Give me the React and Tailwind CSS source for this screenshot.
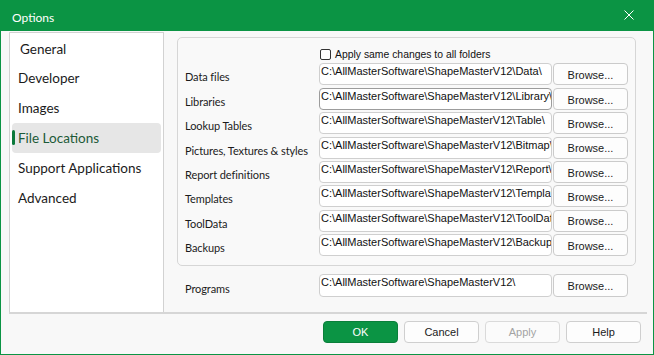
import React from 'react';

const ui = { fontFamily: 'Lato, "Noto Sans", sans-serif' };
const ms = { fontFamily: '"Liberation Sans", Arial, sans-serif' };

const navItems = ['General', 'Developer', 'Images', 'File Locations', 'Support Applications', 'Advanced'];

const folders = [
  ['Data files', 'C:\\AllMasterSoftware\\ShapeMasterV12\\Data\\'],
  ['Libraries', 'C:\\AllMasterSoftware\\ShapeMasterV12\\Library\\'],
  ['Lookup Tables', 'C:\\AllMasterSoftware\\ShapeMasterV12\\Table\\'],
  ['Pictures, Textures & styles', 'C:\\AllMasterSoftware\\ShapeMasterV12\\Bitmap\\'],
  ['Report definitions', 'C:\\AllMasterSoftware\\ShapeMasterV12\\Report\\'],
  ['Templates', 'C:\\AllMasterSoftware\\ShapeMasterV12\\Templates\\'],
  ['ToolData', 'C:\\AllMasterSoftware\\ShapeMasterV12\\ToolData\\'],
  ['Backups', 'C:\\AllMasterSoftware\\ShapeMasterV12\\Backups\\'],
];

const PathRow = ({ label, value, focused }) => (
  <div className="flex items-start h-[22px]">
    <div className="w-[134px] mt-[6px] leading-[16px] text-[11px] tracking-[-0.1px] text-[#1b1b1b] whitespace-nowrap" style={ui}>
      {label}
    </div>
    <div
      className={`w-[233px] h-[22px] bg-white rounded-[4px] border overflow-hidden whitespace-nowrap pl-[1px] pt-[1px] text-[11px] leading-[13px] text-[#111] ${
        focused ? 'border-[#9c9c9c]' : 'border-[#cfcfcf]'
      }`}
      style={ms}
    >
      {value}
    </div>
    <button
      className="ml-[1px] w-[75px] h-[22px] bg-[#fdfdfd] border border-[#cbcbcb] rounded-[4px] text-[11px] text-[#1b1b1b] flex items-center justify-center pt-[2px]"
      style={ms}
    >
      Browse...
    </button>
  </div>
);

const FooterButton = ({ children, primary, disabled }) => (
  <button
    className={`w-[75px] h-[22px] rounded-[4px] border text-[11px] flex items-center justify-center ${
      primary
        ? 'bg-[#0b9444] border-[#0a7f3a] text-white'
        : disabled
        ? 'bg-[#fbfbfb] border-[#dadada] text-[#a3a3a3]'
        : 'bg-[#fdfdfd] border-[#cfcfcf] text-[#1b1b1b]'
    }`}
    style={ms}
  >
    {children}
  </button>
);

export default function App() {
  return (
    <div className="w-[654px] h-[355px] border border-[#0b9444] bg-[#f8f8f8] flex flex-col overflow-hidden">
      {/* title bar */}
      <div className="h-[30px] bg-[#0b9444] flex items-center justify-between pl-[11px] pr-[19px] pt-[3px] shrink-0">
        <span className="text-white text-[12px]" style={ui}>Options</span>
        <svg width="10" height="10" viewBox="0 0 10 10" className="-mt-[5px]">
          <path d="M0.5 0.5 L9.5 9.5 M9.5 0.5 L0.5 9.5" stroke="white" strokeWidth="1" />
        </svg>
      </div>

      {/* body */}
      <div className="flex ml-[8px] mr-[6px] h-[283px] border-b-2 border-[#d6d6d6] shrink-0">
        <div className="w-[155px] mt-[1px] bg-white border-x border-t border-[#d2d2d2] px-[2px] flex flex-col">
          {navItems.map((item, i) => {
            const active = item === 'File Locations';
            return (
              <div
                key={item}
                className={`relative h-[30px] flex items-center rounded-[4px] text-[13.5px] ${
                  i === 0 ? 'pl-[8px] pt-[2px]' : 'pl-[6px]'
                } ${active ? 'bg-[#e6e6e6] text-[#1c5a38]' : 'text-[#1b1b1b]'}`}
                style={ui}
              >
                {active && <span className="absolute left-0 top-[7px] w-[3px] h-[15px] rounded-[2px] bg-[#0b7a3b]" />}
                {item}
              </div>
            );
          })}
        </div>

        <div className="flex-1 pl-[13px] pr-[11px] pt-[6px]">
          <div className="border border-[#d6d6d6] rounded-[5px] bg-[#f9f9f9] pl-[7px] pr-[6px] pt-[10px] pb-[9px] flex flex-col gap-[2.4px]">
            <div className="flex items-center h-[13px] pl-[135px]">
              <span className="w-[11px] h-[11px] border border-[#333] rounded-[2px] bg-white" />
              <span className="ml-[4px] text-[10.4px] text-[#111]" style={ms}>
                Apply same changes to all folders
              </span>
            </div>
            {folders.map(([label, value], i) => (
              <PathRow key={label} label={label} value={value} focused={i === 1} />
            ))}
          </div>

          <div className="mt-[8px] pl-[8px]">
            <div className="flex items-start h-[23px]">
              <div className="w-[134px] mt-[7px] leading-[16px] text-[11px] tracking-[-0.1px] text-[#1b1b1b]" style={ui}>
                Programs
              </div>
              <div
                className="w-[233px] h-[23px] bg-white rounded-[4px] border border-[#cfcfcf] overflow-hidden whitespace-nowrap pl-[1px] pt-[1px] text-[11px] leading-[13px] text-[#111]"
                style={ms}
              >
                C:\AllMasterSoftware\ShapeMasterV12\
              </div>
              <button
                className="ml-[1px] w-[75px] h-[23px] bg-[#fdfdfd] border border-[#cbcbcb] rounded-[4px] text-[11px] text-[#1b1b1b] flex items-center justify-center pt-[2px]"
                style={ms}
              >
                Browse...
              </button>
            </div>
          </div>
        </div>
      </div>

      {/* footer */}
      <div className="flex justify-end gap-[6px] pt-[7px] pr-[12px]">
        <FooterButton primary>OK</FooterButton>
        <FooterButton>Cancel</FooterButton>
        <FooterButton disabled>Apply</FooterButton>
        <FooterButton>Help</FooterButton>
      </div>
    </div>
  );
}
